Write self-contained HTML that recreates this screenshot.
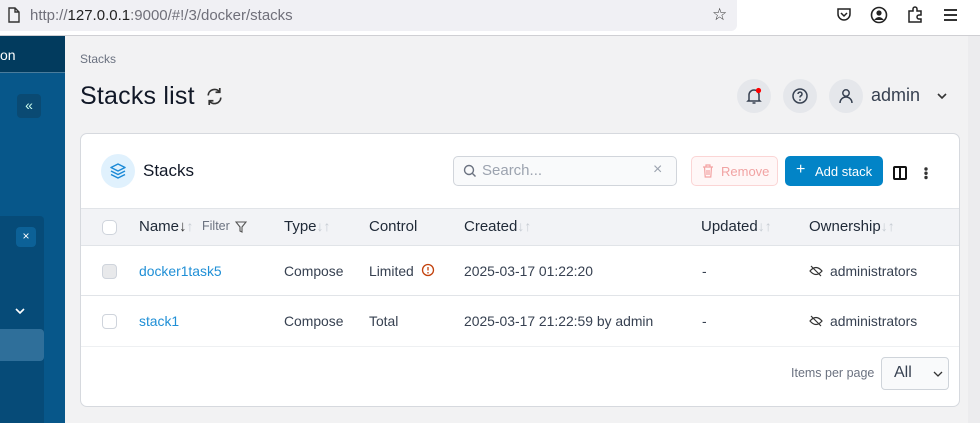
<!DOCTYPE html>
<html><head><style>
*{box-sizing:border-box;margin:0;padding:0}
body{width:980px;height:423px;overflow:hidden;background:#f2f2f3;font-family:"Liberation Sans",sans-serif;position:relative;color:#111827}
.abs{position:absolute}
.url{left:0;top:0;width:980px;height:36px;background:#fff;border-bottom:1px solid #cfcfd3}
.urlbox{left:0;top:0;width:737px;height:31px;background:#f0f0f4;border-radius:0 0 6px 0}
.side{left:0;top:36px;width:65px;height:387px;background:#07578a}
.cb{position:absolute;left:102px;width:15px;height:15px;border:1px solid #cfd4dc;border-radius:4px;background:#fff}
.row{position:absolute;left:81px;width:878px;font-size:13.9px;color:#374151}
.row span{position:absolute;white-space:nowrap}
.ar{color:#c7ccd3;font-size:14px}
</style></head><body>
<div class="abs url"></div>
<div class="abs urlbox"></div>
<svg class="abs" style="left:7px;top:7px" width="14" height="16"><path d="M2 1h6l4 4v10H2z M8 1v4h4" fill="none" stroke="#333" stroke-width="1.4"/></svg>
<div class="abs" style="left:30px;top:7px;font-size:15px;color:#70707a">http://<span style="color:#222">127.0.0.1</span>:9000/#!/3/docker/stacks</div>
<div class="abs" style="left:712px;top:5px;font-size:17px;color:#333">☆</div>
<svg class="abs" style="left:836px;top:7px" width="16" height="16"><path d="M2 2h12v5a6 6 0 0 1-12 0z M5 6l3 3 3-3" fill="none" stroke="#222" stroke-width="1.5"/></svg>
<svg class="abs" style="left:870px;top:6px" width="18" height="18"><circle cx="9" cy="9" r="7.5" fill="none" stroke="#222" stroke-width="1.6"/><circle cx="9" cy="7" r="2.6" fill="#222"/><path d="M4 14q5-6 10 0" fill="#222"/></svg>
<svg class="abs" style="left:906px;top:6px" width="18" height="18"><path d="M3 5h4V3a2 2 0 0 1 4 0v2h4v4h-2a2 2 0 0 0 0 4h2v3H3z" fill="none" stroke="#222" stroke-width="1.5"/></svg>
<div class="abs" style="left:944px;top:9px;width:13px;height:2px;background:#333;box-shadow:0 5px 0 #333,0 10px 0 #333"></div>

<div class="abs side"></div>
<div class="abs" style="left:0;top:36px;width:65px;height:37px;background:#023b5e;border-bottom:1px solid #4a7c9c"></div>
<div class="abs" style="left:0;top:47px;color:#fff;font-size:14px">on</div>
<div class="abs" style="left:17px;top:94px;width:24px;height:24px;border-radius:4px;background:#0a4a73;color:#cfe;font-size:14px;text-align:center;line-height:22px">«</div>
<div class="abs" style="left:0;top:216px;width:44px;height:207px;background:#064b78;border-radius:0 4px 0 0"></div>
<div class="abs" style="left:16px;top:227px;width:20px;height:20px;border-radius:4px;background:#0c6197;color:#fff;font-size:12px;text-align:center;line-height:19px">×</div>
<svg class="abs" style="left:14px;top:306px" width="12" height="10"><path d="M2 3l4 4 4-4" fill="none" stroke="#fff" stroke-width="1.6"/></svg>
<div class="abs" style="left:0;top:329px;width:44px;height:32px;background:#2f6f9a;border-radius:0 4px 4px 0"></div>

<div class="abs" style="left:80px;top:52px;font-size:12px;color:#6b7280">Stacks</div>
<div class="abs" style="left:80px;top:82px;font-size:25px;color:#111827;letter-spacing:.2px">Stacks list</div>
<svg class="abs" style="left:205px;top:87px" width="19" height="19" viewBox="0 0 18 18"><path d="M3 8a6 6 0 0 1 11-3M15 10a6 6 0 0 1-11 3M14 1v4h-4M4 17v-4h4" fill="none" stroke="#333" stroke-width="1.6"/></svg>

<div class="abs" style="left:737px;top:79px;width:34px;height:34px;border-radius:50%;background:#e5e7eb"></div>
<svg class="abs" style="left:745px;top:87px" width="18" height="18"><path d="M4 13V8a5 5 0 0 1 10 0v5l1 1H3z M7.5 16h3" fill="none" stroke="#374151" stroke-width="1.5"/><circle cx="13.5" cy="3.5" r="2.6" fill="#f00"/></svg>
<div class="abs" style="left:783px;top:79px;width:34px;height:34px;border-radius:50%;background:#e5e7eb"></div>
<svg class="abs" style="left:791px;top:87px" width="18" height="18"><circle cx="9" cy="9" r="7" fill="none" stroke="#374151" stroke-width="1.5"/><path d="M7 7a2 2 0 1 1 2.5 2c-.5.3-.5.7-.5 1.5" fill="none" stroke="#374151" stroke-width="1.5"/><circle cx="9" cy="13" r=".9" fill="#374151"/></svg>
<div class="abs" style="left:829px;top:79px;width:34px;height:34px;border-radius:50%;background:#e5e7eb"></div>
<svg class="abs" style="left:837px;top:87px" width="18" height="18"><circle cx="9" cy="6" r="3.2" fill="none" stroke="#374151" stroke-width="1.5"/><path d="M3 16a6 6 0 0 1 12 0" fill="none" stroke="#374151" stroke-width="1.5"/></svg>
<div class="abs" style="left:871px;top:85px;font-size:18px;color:#374151">admin</div>
<svg class="abs" style="left:936px;top:91px" width="12" height="10"><path d="M2 3l4 4 4-4" fill="none" stroke="#333" stroke-width="1.6"/></svg>

<div class="abs" style="left:80px;top:133px;width:880px;height:274px;background:#fff;border:1px solid #d6d9de;border-radius:7px"></div>
<div class="abs" style="left:101px;top:154px;width:34px;height:34px;border-radius:50%;background:#e0f1fd"></div>
<svg class="abs" style="left:109px;top:162px" width="18" height="18"><path d="M9 2l7 3.5-7 3.5-7-3.5z M2 9l7 3.5 7-3.5 M2 12.5l7 3.5 7-3.5" fill="none" stroke="#1c8ad6" stroke-width="1.5" stroke-linejoin="round"/></svg>
<div class="abs" style="left:143px;top:161px;font-size:17px">Stacks</div>

<div class="abs" style="left:453px;top:156px;width:224px;height:30px;border:1px solid #d1d5db;border-radius:5px;background:#f9fafb"></div>
<svg class="abs" style="left:463px;top:164px" width="14" height="14"><circle cx="6" cy="6" r="4.5" fill="none" stroke="#6b7280" stroke-width="1.4"/><path d="M9.5 9.5l3 3" stroke="#6b7280" stroke-width="1.4"/></svg>
<div class="abs" style="left:482px;top:162px;font-size:15px;color:#9ca3af">Search...</div>
<div class="abs" style="left:653px;top:161px;font-size:16px;color:#9ca3af">×</div>
<div class="abs" style="left:691px;top:156px;width:87px;height:30px;border:1px solid #fbd5d5;border-radius:5px;background:#fff7f7"></div>
<svg class="abs" style="left:702px;top:164px" width="12" height="14"><path d="M1 3h10M4 3V1h4v2M2.5 3l.7 10h5.6l.7-10M5 6v5M7 6v5" fill="none" stroke="#f3a3a3" stroke-width="1.2"/></svg>
<div class="abs" style="left:721px;top:164px;font-size:13px;color:#f1a3a3">Remove</div>
<div class="abs" style="left:785px;top:156px;width:98px;height:30px;border-radius:5px;background:#0284c7"></div>
<div class="abs" style="left:796px;top:162px;font-size:16px;color:#fff;line-height:16px">+</div>
<div class="abs" style="left:815px;top:164px;font-size:13px;color:#fff">Add stack</div>
<div class="abs" style="left:893px;top:166px;width:14px;height:14px;border:2px solid #111;border-radius:2px"></div>
<div class="abs" style="left:899px;top:166px;width:2px;height:14px;background:#111"></div>
<div class="abs" style="left:924px;top:167px;width:4px;height:4px;border-radius:50%;background:#333;box-shadow:0 5px 0 #333,0 10px 0 #333;transform:scale(.85)"></div>

<div class="abs" style="left:81px;top:208px;width:878px;height:38px;background:#f2f3f6;border-top:1px solid #e1e4e8;border-bottom:1px solid #e1e4e8"></div>
<div class="cb" style="top:220px;border-radius:5px"></div>
<div class="row" style="top:218px;font-size:15px;color:#1f2937">
<span style="left:58px">Name<span style="position:static;color:#333">↓</span><span class="ar" style="position:static">↑</span></span>
<span style="left:121px;font-size:12.5px;color:#6b7280;top:1px">Filter</span>
<svg style="position:absolute;left:154px;top:3px" width="12" height="12"><path d="M1 1h10L7 6v5L5 10V6z" fill="none" stroke="#555" stroke-width="1.1"/></svg>
<span style="left:203px">Type<span class="ar" style="position:static">↓↑</span></span>
<span style="left:288px">Control</span>
<span style="left:383px">Created<span class="ar" style="position:static">↓↑</span></span>
<span style="left:620px">Updated<span class="ar" style="position:static">↓↑</span></span>
<span style="left:728px">Ownership<span class="ar" style="position:static">↓↑</span></span>
</div>

<div class="cb" style="top:264px;background:#e8e9eb"></div>
<div class="row" style="top:263px">
<span style="left:58px;color:#1f8fd6">docker1task5</span>
<span style="left:203px">Compose</span>
<span style="left:288px">Limited</span>
<svg style="position:absolute;left:340px;top:0" width="14" height="14"><circle cx="7" cy="7" r="5.5" fill="none" stroke="#c2410c" stroke-width="1.3"/><path d="M7 4v3.5" stroke="#c2410c" stroke-width="1.3"/><circle cx="7" cy="9.8" r=".8" fill="#c2410c"/></svg>
<span style="left:383px">2025-03-17 01:22:20</span>
<span style="left:621px">-</span>
<svg style="position:absolute;left:728px;top:2px" width="14" height="12"><path d="M1 6q6-7 12 0q-6 7-12 0z M2 1l10 10" fill="none" stroke="#333" stroke-width="1.2"/></svg>
<span style="left:749px">administrators</span>
</div>
<div class="abs" style="left:81px;top:295px;width:878px;height:1px;background:#e1e4e8"></div>
<div class="cb" style="top:314px"></div>
<div class="row" style="top:313px">
<span style="left:58px;color:#1f8fd6">stack1</span>
<span style="left:203px">Compose</span>
<span style="left:288px">Total</span>
<span style="left:383px">2025-03-17 21:22:59 by admin</span>
<span style="left:621px">-</span>
<svg style="position:absolute;left:728px;top:2px" width="14" height="12"><path d="M1 6q6-7 12 0q-6 7-12 0z M2 1l10 10" fill="none" stroke="#333" stroke-width="1.2"/></svg>
<span style="left:749px">administrators</span>
</div>
<div class="abs" style="left:81px;top:346px;width:878px;height:1px;background:#eef0f2"></div>
<div class="abs" style="left:791px;top:366px;font-size:12.5px;color:#6b7280">Items per page</div>
<div class="abs" style="left:881px;top:357px;width:68px;height:33px;border:1px solid #cfd4da;border-radius:4px;background:#f9fafb"></div>
<div class="abs" style="left:894px;top:364px;font-size:16px;color:#374151">All</div>
<svg class="abs" style="left:933px;top:370px" width="10" height="8"><path d="M1 2l4 4 4-4" fill="none" stroke="#333" stroke-width="1.3"/></svg>
<div class="abs" style="left:968px;top:36px;width:12px;height:387px;background:#ececee"></div>
</body></html>
